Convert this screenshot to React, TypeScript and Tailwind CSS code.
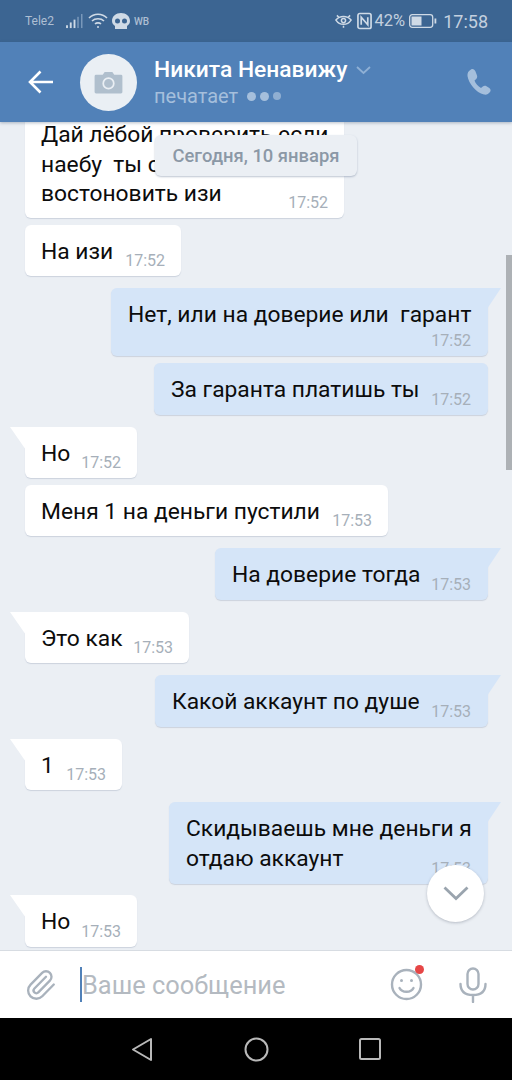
import React from 'react'

const font = { fontFamily: 'Roboto, sans-serif' }

function Tail({ side, color }: { side: 'left' | 'right'; color: string }) {
  if (side === 'left') {
    return (
      <svg className="absolute left-[-15px] top-0" width="16" height="24" viewBox="0 0 16 24">
        <path d="M0 0 H16 V23 Z" fill={color} />
      </svg>
    )
  }
  return (
    <svg className="absolute right-[-13px] top-0" width="14" height="22" viewBox="0 0 14 22">
      <path d="M14 0 H0 V21 Z" fill={color} />
    </svg>
  )
}

type Msg = {
  text: React.ReactNode
  time: string
  out?: boolean
  tail?: boolean
  width: string
  height: string
  gap: string
  stacked?: boolean
}

function Bubble({ text, time, out, tail, width, height, gap, stacked }: Msg) {
  const color = out ? '#d5e5f8' : '#ffffff'
  return (
    <div
      className={`relative shrink-0 rounded-md shadow-[0_1px_1px_rgba(90,110,140,0.22)] ${width} ${height} ${gap} ${
        out ? 'self-end mr-6 bg-[#d5e5f8] pl-[17px]' : 'self-start ml-[25px] bg-white pl-[17px]'
      } ${tail ? (out ? 'rounded-tr-none' : 'rounded-tl-none') : ''}`}
    >
      {tail && <Tail side={out ? 'right' : 'left'} color={color} />}
      <div
        className={`-ml-px pr-[12px] text-[22.8px] text-[#0c0c0c] whitespace-pre-wrap ${
          stacked ? 'pt-[12px] leading-[29.5px]' : 'pt-[12px] leading-[29px]'
        } ${out ? 'ml-0' : ''}`}
      >
        {text}
      </div>
      <span className={`absolute bottom-[6px] text-[16px] leading-[19px] text-[#a6afb9] ${out ? 'right-[17px]' : 'right-[16px]'}`}>{time}</span>
    </div>
  )
}

const messages: Msg[] = [
  {
    text: (
      <>
        Дай лёбой проверить если
        <br />
        наебу  ты с почты
        <br />
        востоновить изи
      </>
    ),
    time: '17:52',
    width: 'w-[319px]',
    height: 'h-[110px]',
    gap: '-mt-[14px]',
    stacked: true,
  },
  { text: 'На изи', time: '17:52', width: 'w-[156px]', height: 'h-[51px]', gap: 'mt-[7px]' },
  { text: 'Нет, или на доверие или  гарант', time: '17:52', out: true, tail: true, width: 'w-[377px]', height: 'h-[68px]', gap: 'mt-[12px]' },
  { text: 'За гаранта платишь ты', time: '17:52', out: true, width: 'w-[334px]', height: 'h-[52px]', gap: 'mt-[7px]' },
  { text: 'Но', time: '17:52', tail: true, width: 'w-[112px]', height: 'h-[51px]', gap: 'mt-[12px]' },
  { text: 'Меня 1 на деньги пустили', time: '17:53', width: 'w-[363px]', height: 'h-[51px]', gap: 'mt-[7px]' },
  { text: 'На доверие тогда', time: '17:53', out: true, tail: true, width: 'w-[273px]', height: 'h-[52px]', gap: 'mt-[12px]' },
  { text: 'Это как', time: '17:53', tail: true, width: 'w-[164px]', height: 'h-[51px]', gap: 'mt-[12px]' },
  { text: 'Какой аккаунт по душе', time: '17:53', out: true, tail: true, width: 'w-[333px]', height: 'h-[52px]', gap: 'mt-[12px]' },
  { text: '1', time: '17:53', tail: true, width: 'w-[97px]', height: 'h-[51px]', gap: 'mt-[12px]' },
  {
    text: (
      <>
        Скидываешь мне деньги я
        <br />
        отдаю аккаунт
      </>
    ),
    time: '17:53',
    out: true,
    tail: true,
    width: 'w-[319px]',
    height: 'h-[82px]',
    gap: 'mt-[12px]',
    stacked: true,
  },
  { text: 'Но', time: '17:53', tail: true, width: 'w-[112px]', height: 'h-[52px]', gap: 'mt-[11px]' },
]

function StatusBar() {
  return (
    <div className="flex h-[42px] shrink-0 items-center justify-between bg-[#3c6592] pl-[25px] pr-[24px] text-[#aebfd3]">
      <div className="flex items-center">
        <span className="text-[12px]">Tele2</span>
        <svg className="ml-[12px]" width="17" height="15" viewBox="0 0 18 16">
          <rect x="0" y="12" width="2" height="3" fill="#cfdae6" />
          <rect x="4" y="9" width="2" height="6" fill="#cfdae6" />
          <rect x="8" y="6" width="2" height="9" fill="#cfdae6" />
          <rect x="12" y="3" width="1.5" height="12" fill="#7e9cbd" />
          <rect x="16" y="0" width="1.5" height="15" fill="#7e9cbd" />
        </svg>
        <svg className="ml-[5px]" width="20" height="16" viewBox="0 0 20 16" fill="none" stroke="#cfdae6" strokeWidth="1.6">
          <path d="M1 5 C6 0 14 0 19 5" />
          <path d="M4 8 C7 5 13 5 16 8" />
          <path d="M7 11 C8.500 9.500 11.500 9.500 13 11" />
          <circle cx="10" cy="14" r="1" fill="#cfdae6" stroke="none" />
        </svg>
        <svg className="ml-[4px]" width="18" height="17" viewBox="0 0 18 17">
          <path d="M9 0 C14 0 18 3 18 8 C18 11 16 12 15 13 V16 H3 V13 C2 12 0 11 0 8 C0 3 4 0 9 0 Z" fill="#cfdae6" />
          <circle cx="5.500" cy="8" r="2.500" fill="#3c6592" />
          <circle cx="12.500" cy="8" r="2.500" fill="#3c6592" />
        </svg>
        <span className="ml-[4px] text-[10px] font-medium">WB</span>
      </div>
      <div className="flex items-center">
        <svg width="17" height="15" viewBox="0 0 18 15" fill="none" stroke="#cfdae6" strokeWidth="1.6">
          <path d="M1 6 C5 1 13 1 17 6 C13 12 5 12 1 6 Z" />
          <circle cx="9" cy="6.500" r="2.200" />
          <path d="M2 1 L4 3 M16 1 L14 3 M9 12 V14" />
        </svg>
        <svg className="ml-[5px]" width="15" height="18" viewBox="0 0 16 18" fill="none" stroke="#cfdae6" strokeWidth="1.800">
          <rect x="1" y="1" width="14" height="16" rx="2" />
          <path d="M4.500 13 V5 L11.500 13 V5" />
        </svg>
        <span className="ml-[3px] text-[16.5px] text-[#c3d0df]">42%</span>
        <svg className="ml-[4px]" width="28" height="14" viewBox="0 0 28 14">
          <rect x="0.700" y="0.700" width="23" height="12.600" rx="2.500" fill="none" stroke="#cfdae6" strokeWidth="1.300" />
          <rect x="2.500" y="2.500" width="10" height="9" fill="#cfdae6" />
          <rect x="25.500" y="4.500" width="1.800" height="5" fill="#cfdae6" />
        </svg>
        <span className="ml-[6px] text-[18px] text-[#c3d0df]">17:58</span>
      </div>
    </div>
  )
}

function Header() {
  return (
    <div className="z-10 flex h-[80px] shrink-0 items-center bg-[#5181b8] shadow-[0_1px_3px_rgba(50,70,100,0.35)]">
      <svg className="ml-[28px]" width="26" height="24" viewBox="0 0 26 24" fill="none" stroke="#ffffff" strokeWidth="2.600">
        <path d="M25 12 H2 M12.500 1.500 L2 12 L12.500 22.500" />
      </svg>
      <div className="ml-[26px] flex h-[57px] w-[57px] shrink-0 items-center justify-center rounded-full bg-[#eaeff4]">
        <svg width="29" height="23" viewBox="0 0 30 24">
          <path d="M2 4 H9 L11 1 H19 L21 4 H28 A1.500 1.500 0 0 1 29.500 5.500 V22 A1.500 1.500 0 0 1 28 23.500 H2 A1.500 1.500 0 0 1 0.500 22 V5.500 A1.500 1.500 0 0 1 2 4 Z" fill="#b0bfcd" />
          <circle cx="15" cy="13" r="5.500" fill="none" stroke="#eaeff4" strokeWidth="1.800" />
        </svg>
      </div>
      <div className="ml-[17px] flex min-w-0 flex-col">
        <div className="flex items-center">
          <span className="text-[22.8px] leading-[28px] font-medium text-white">Никита Ненавижу</span>
          <svg className="ml-[9px]" width="15" height="9" viewBox="0 0 15 9" fill="none" stroke="#8fb0d5" strokeWidth="1.800">
            <path d="M1 1 L7.500 7 L14 1" />
          </svg>
        </div>
        <div className="flex items-center">
          <span className="text-[20px] leading-[24px] text-[#a5bfdc]">печатает</span>
          <span className="ml-[9px] h-[9px] w-[9px] rounded-full bg-[#a5bfdc]" />
          <span className="ml-[4px] h-[9px] w-[9px] rounded-full bg-[#a5bfdc]" />
          <span className="ml-[4px] h-[8px] w-[8px] rounded-full bg-[#90afd2]" />
        </div>
      </div>
      <svg className="ml-auto mr-[21px]" width="26" height="28" viewBox="0 0 26 28">
        <path
          d="M6 1.500 C8 0.500 9.500 1.500 10.500 3.500 L12 7.500 C12.500 9 12 10.300 11 11.200 L9.500 12.500 C10.500 15.500 13 18.500 16 20 L17.800 18.500 C19 17.700 20.200 17.600 21.500 18.300 L24.300 20 C25.800 21 26 22.800 25 24 C23.500 26 21.500 27 19 26.500 C11 25 3.500 15 2.500 8 C2.200 5 3.500 2.800 6 1.500 Z"
          fill="#a5bfdc"
        />
      </svg>
    </div>
  )
}

function InputBar() {
  return (
    <div className="flex h-[68px] shrink-0 items-center border-t border-[#d7dce2] bg-white">
      <svg className="ml-[24px]" width="33" height="36" viewBox="0 0 24 24" fill="none" stroke="#a9b2bc" strokeWidth="1.700" strokeLinecap="round" strokeLinejoin="round">
        <path d="m16 6-8.414 8.586a2 2 0 0 0 2.829 2.829l8.414-8.586a4 4 0 1 0-5.657-5.657l-8.379 8.551a6 6 0 1 0 8.485 8.485l8.379-8.551" />
      </svg>
      <span className="ml-[23px] h-[35px] w-[2px] bg-[#5181b8]" />
      <span className="text-[25.4px] leading-[34px] text-[#b4bac1]">Ваше сообщение</span>
      <div className="relative ml-auto">
        <svg width="33" height="33" viewBox="0 0 33 33" fill="none" stroke="#a9b2bc" strokeWidth="2.400" strokeLinecap="round">
          <circle cx="16.500" cy="16.500" r="14.500" />
          <path d="M9.500 20 C12 25 21 25 23.500 20" />
          <circle cx="11.500" cy="12.500" r="1.500" fill="#a9b2bc" stroke="none" />
          <circle cx="21.500" cy="12.500" r="1.500" fill="#a9b2bc" stroke="none" />
        </svg>
        <span className="absolute right-[-1px] top-[-3px] h-[9px] w-[9px] rounded-full bg-[#e64646]" />
      </div>
      <svg className="ml-[36px] mr-[25px]" width="28" height="36" viewBox="0 0 28 36" fill="none" stroke="#a9b2bc" strokeWidth="2.400" strokeLinecap="round">
        <rect x="8.500" y="1.500" width="11" height="21" rx="5.500" />
        <path d="M1.500 17 C1.500 25 7 28 14 28 C21 28 26.500 25 26.500 17 M14 28 V35" />
      </svg>
    </div>
  )
}

function NavBar() {
  return (
    <div className="flex h-[62px] shrink-0 items-center bg-black pl-[131px]">
      <svg width="22" height="25" viewBox="0 0 22 25" fill="none" stroke="#b9b9b9" strokeWidth="2" strokeLinejoin="round">
        <path d="M20 2 V23 L2 12.500 Z" />
      </svg>
      <svg className="ml-[91px]" width="25" height="25" viewBox="0 0 25 25" fill="none" stroke="#b9b9b9" strokeWidth="2">
        <circle cx="12.500" cy="12.500" r="11" />
      </svg>
      <svg className="ml-[90px]" width="22" height="22" viewBox="0 0 22 22" fill="none" stroke="#b9b9b9" strokeWidth="2">
        <rect x="1" y="1" width="20" height="20" rx="1.500" />
      </svg>
    </div>
  )
}

export default function App() {
  return (
    <div className="flex h-[1080px] w-[512px] flex-col overflow-hidden" style={font}>
      <StatusBar />
      <Header />
      <div className="relative flex min-h-0 flex-1 flex-col overflow-hidden bg-[#ebeff4]">
        {messages.map((m, i) => (
          <Bubble key={i} {...m} />
        ))}
        {/* floating bits over the list */}
        <div className="absolute left-[155px] top-[13px] flex h-[41px] w-[202px] items-center justify-center rounded-md bg-[#ebeff4] text-[18.4px] font-medium text-[#8b98a6] shadow-[0_1px_2px_rgba(90,110,140,0.4)]">
          Сегодня, 10 января
        </div>
        <div className="absolute right-0 top-[133px] h-[215px] w-[6px] bg-[#adb1b5]" />
        <div className="absolute left-[427px] top-[743px] flex h-[57px] w-[57px] items-center justify-center rounded-full bg-white shadow-[0_1px_3px_rgba(60,70,90,0.3)]">
          <svg width="26" height="15" viewBox="0 0 26 15" fill="none" stroke="#9aa4ae" strokeWidth="2.800">
            <path d="M1.500 1.500 L13 12.500 L24.500 1.500" />
          </svg>
        </div>
      </div>
      <InputBar />
      <NavBar />
    </div>
  )
}
